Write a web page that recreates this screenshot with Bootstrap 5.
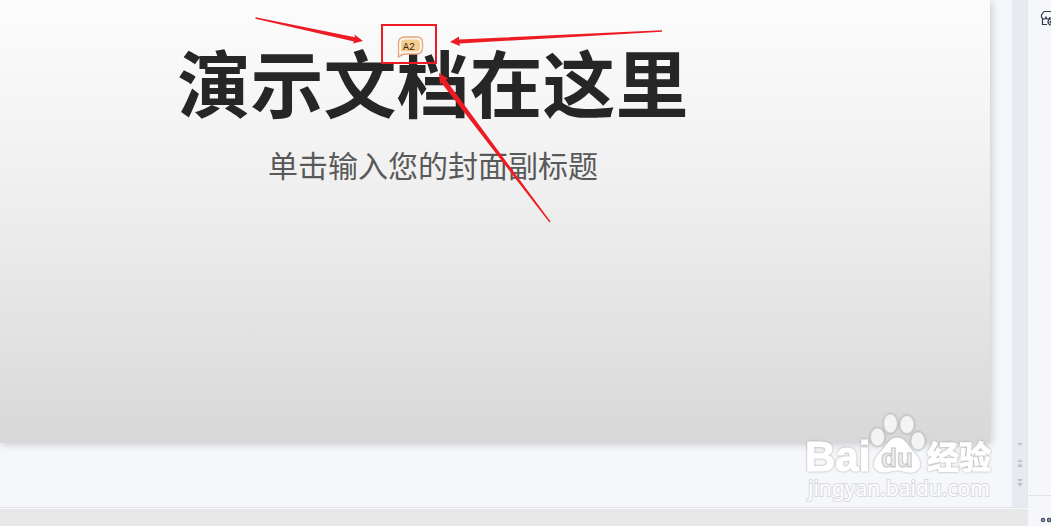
<!DOCTYPE html>
<html lang="zh-CN">
<head>
<meta charset="utf-8">
<meta name="viewport" content="width=device-width, initial-scale=1">
<title>演示文档</title>
<link href="https://cdn.jsdelivr.net/npm/bootstrap@5.3.0/dist/css/bootstrap.min.css" rel="stylesheet">
<style>
body{font-family:"Liberation Sans","Noto Sans CJK SC",sans-serif;background:#f5f6f9}
.workspace{background:#f5f7fa;padding:0 22px 64px 0}
.slide{background:linear-gradient(#fcfcfc,#f3f3f3 32%,#ebebeb 54%,#d8d8d8);box-shadow:1px 1px 9px rgba(0,0,0,.2);padding:36px 124px 0 0}
.slide-title{font-family:"Noto Sans CJK SC",sans-serif;font-size:73px;line-height:88px;font-weight:700;color:#262626}
.slide-subtitle{font-family:"Noto Sans CJK SC",sans-serif;font-size:30px;line-height:40px;color:#595959;margin-top:20px}
.marks{left:50%;top:0;margin-left:-433px;overflow:visible;pointer-events:none}
.anchor-box{width:0;left:433px}
.scroll-strip{width:16px;background:#e8eaf1;border-right:1px solid #e3e5ed;padding-bottom:14px}
.scroll-strip button{width:15px;height:20px;line-height:0}
.status-strip{height:19px;background:#e8e8e8;border-top:1px solid #e2e4e8;box-shadow:inset 0 1px #f5f7fa}
.side-rail{width:23px;background:#f6f7fa}
.side-rail .tool{height:30px;padding:6px 0 0 12px;line-height:0;text-align:left}
.side-rail .more{height:31px;margin-left:1px;padding:16px 0 0 11px;line-height:0;text-align:left}
.watermark{right:24px;bottom:4px;pointer-events:none;overflow:visible}
</style>
</head>
<body class="vh-100 overflow-hidden">
<div class="d-flex h-100">
  <div class="d-flex flex-column flex-grow-1">
    <div class="d-flex flex-grow-1 position-relative">
      <main class="workspace flex-grow-1 d-flex flex-column">
        <section class="slide position-relative flex-grow-1 text-center">
          <h1 class="slide-title mb-0 text-nowrap">演示文档在这里</h1>
          <p class="slide-subtitle mb-0 text-nowrap">单击输入您的封面副标题</p>
          <div class="anchor-box position-absolute top-0">
            <svg class="marks position-absolute" width="866" height="240" viewBox="0 0 866 240">
              <rect x="382" y="25" width="54" height="38" fill="none" stroke="#ed1c24" stroke-width="2"/>
              <path d="M398.500 57V43Q398.500 37 405 37H417Q422.500 37 422.500 43V48Q422.500 54 416 54H405Q402 54 398.500 57Z" fill="#fff8f1" stroke="#e5a47d" stroke-width="1.300"/>
              <path d="M401 51V43Q401 39.500 405 39.500H416Q420 39.500 420 43V48Q420 51.500 416 51.500H401Z" fill="#f3cd92"/>
              <text x="403" y="50" font-family="Liberation Mono" font-size="10" fill="#3d2500">A2</text>
              <g fill="#ed1c24">
                <path d="M255.500 17.200L355 37.200L354.500 34.500L363 41L353 43.500L354 41.500L255.500 18.800Z"/>
                <path d="M662 30.200L459 39.500V36.500L450 42L460 46L459.500 43.500L662 31.800Z"/>
                <path d="M439 73L448 78.500L445.800 79.800L550.500 221.500L549.500 222.500L441.500 83L440 84.500Z"/>
              </g>
            </svg>
          </div>
        </section>
      </main>
      <div class="scroll-strip d-flex flex-column justify-content-end">
        <button type="button" class="border-0 p-0 bg-transparent" aria-label="向下滚动"><svg width="8" height="10" fill="#c2c3c8"><path d="M1 5H7L4 8Z"/></svg></button>
        <button type="button" class="border-0 p-0 bg-transparent" aria-label="上一张"><svg width="8" height="10" fill="#c2c3c8"><path d="M1 4L4 1L7 4ZM1 9L4 5L7 9Z"/></svg></button>
        <button type="button" class="border-0 p-0 bg-transparent" aria-label="下一张"><svg width="8" height="10" fill="#c2c3c8"><path d="M1 1H7L4 4ZM1 5H7L4 9Z"/></svg></button>
      </div>
      <svg class="watermark position-absolute" width="204" height="97" viewBox="800 406 204 97" role="img" aria-label="Baidu 经验">
        <defs><filter id="soft" x="-10%" y="-10%" width="120%" height="120%"><feDropShadow dx="0" dy="0" stdDeviation="1" flood-color="#888" flood-opacity=".8"/></filter></defs>
        <g filter="url(#soft)" fill="#fff" stroke="#fff" stroke-linejoin="round">
          <text x="805" y="471" font-family="Liberation Sans" font-weight="700" font-size="42" stroke-width="1">Bai</text>
          <g stroke="#d2d2d2" stroke-width="1" fill="#f4f4f4">
            <ellipse cx="877.500" cy="437" rx="7" ry="9"/><ellipse cx="890.500" cy="423.500" rx="6.800" ry="9.500"/><ellipse cx="907" cy="424.500" rx="7" ry="9"/><ellipse cx="918" cy="441" rx="7" ry="9"/>
          </g>
          <path d="M897 438C889 438 887 446 880 453C871 462 873 472 884 472C890 472 892 470 897 470C904 470 906 473 912 472C922 471 922 461 914 453C907 446 906 438 897 438Z"/>
          <text x="927" y="469" font-family="Noto Sans CJK SC" font-weight="700" font-size="32">经验</text>
        </g>
        <text x="881" y="467" font-family="Liberation Sans" font-weight="700" font-size="26" fill="#eee" stroke="#c4c4c4" stroke-width="1">du</text>
        <text x="808" y="496" font-family="Noto Sans" font-size="21" fill="#fff" stroke="#d9dade" stroke-width="2" paint-order="stroke">jingyan.baidu.com</text>
      </svg>
    </div>
    <footer class="status-strip"></footer>
  </div>
  <aside class="side-rail d-flex flex-column justify-content-between overflow-hidden">
    <button type="button" class="tool border-0 bg-transparent" aria-label="素材库"><svg width="18" height="16" fill="none" stroke="#30394e" stroke-width="1.200"><path d="M4 1.500H15L17 7M4 1.500L1.500 5V7Q2 9 4 9Q6 9 6 6.500Q6 9 8 9Q10 9 10 7M2.500 9V14.500H7"/><circle cx="11" cy="12" r="3"/><circle cx="11" cy="12" r="1"/></svg></button>
    <button type="button" class="more border-0 border-top bg-transparent" aria-label="更多"><svg width="18" height="18" fill="#fff" stroke="#3f4a66" stroke-width="1.400"><circle cx="3" cy="8" r="1.500"/><circle cx="9" cy="8" r="1.500"/><circle cx="15" cy="8" r="1.500"/></svg></button>
  </aside>
</div>
</body>
</html>
